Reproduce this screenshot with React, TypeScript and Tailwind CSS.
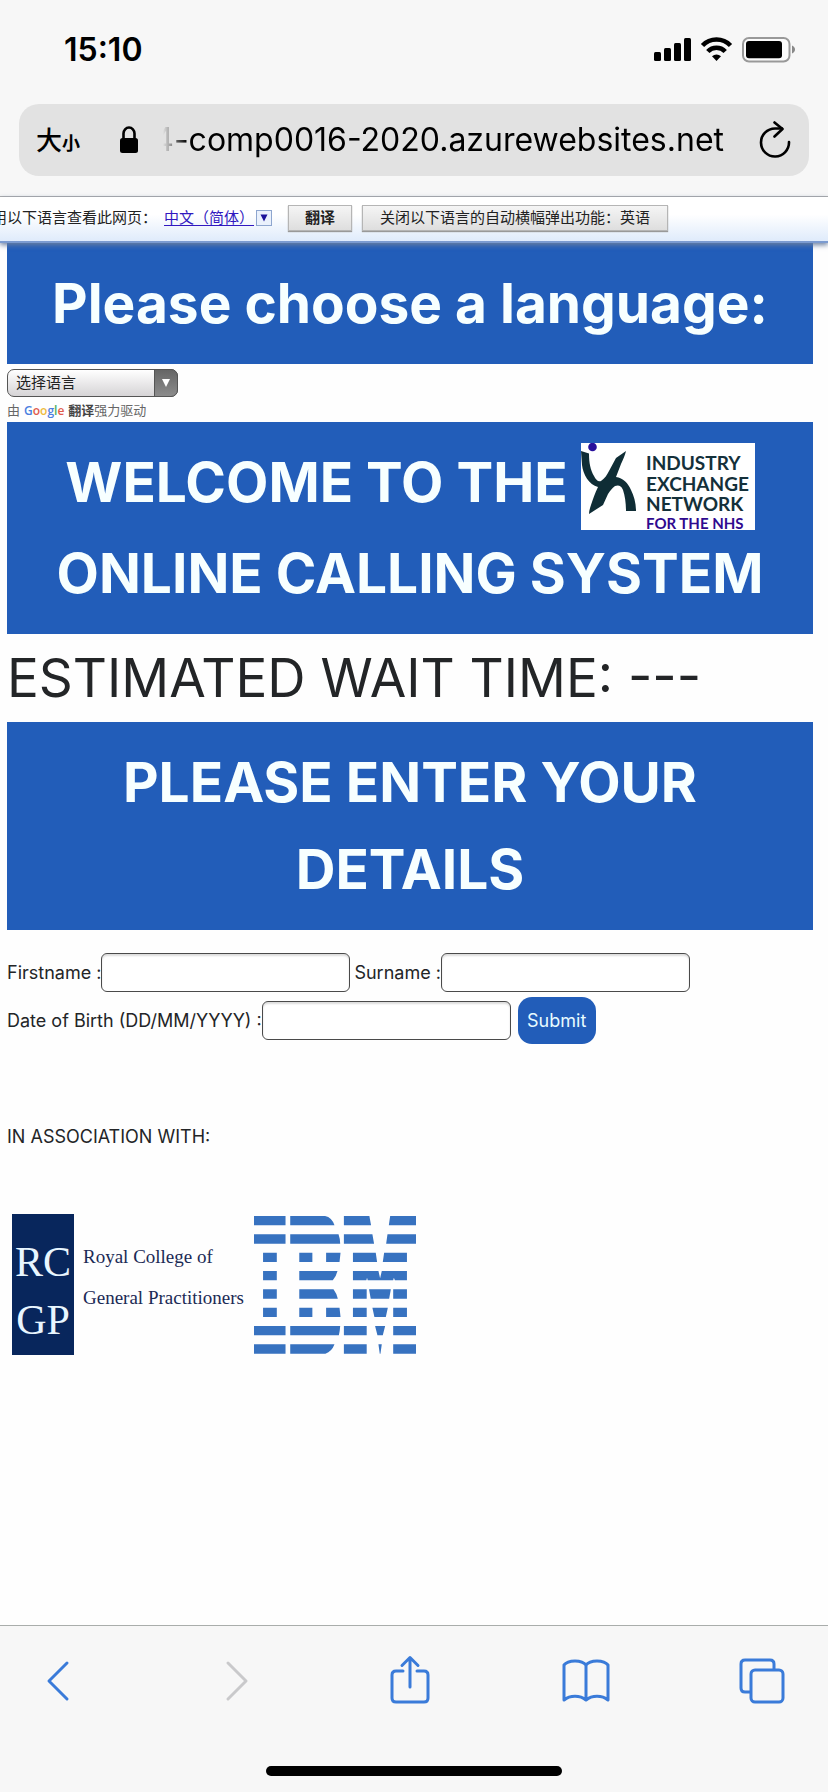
import React from "react";

function StatusIcons() {
  return (
    <svg className="h-8 w-[144px]" viewBox="652 34 144 32" aria-label="Signal, Wi-Fi and battery">
      <rect x="653" y="52" width="7" height="9" rx="1.5" />
      <rect x="663" y="48" width="7" height="13" rx="1.5" />
      <rect x="673" y="43" width="7" height="18" rx="1.5" />
      <rect x="683" y="38" width="7" height="23" rx="1.5" />
      <g fill="none" stroke="#000" strokeWidth="4.6">
        <path d="M701.5 45.5a19.500 19.500 0 0 1 28 0" />
        <path d="M706.800 51.500a12 12 0 0 1 17.400 0" />
      </g>
      <path d="M711 56.200a7 7 0 0 1 9 0l-4.500 4.800z" />
      <rect x="742" y="38" width="46.500" height="23.500" rx="6" fill="#fbfbfb" stroke="#999" strokeWidth="2" />
      <rect x="745" y="41" width="36" height="17.300" rx="3" />
      <path d="M791 45.500c4 1.500 4 6.500 0 8z" fill="#888" />
    </svg>
  );
}

function NetworkLogo() {
  return (
    <svg
      className="inline-block h-[87px] w-[174px] align-middle"
      viewBox="0 0 174 87"
      role="img"
      aria-label="Industry Exchange Network for the NHS"
    >
      <rect width="174" height="87" fill="#fff" />
      <path
        d="M0 8l8 2.500C8 20 9.500 27 13 33c2 4 4 6 7 5 4-3 6-6 8-10l7-13 10-7c-1 4-3 9-5 13l-5 13c7 1 12 6 15 13 3 6 5 13 5 21H45c0-8-1-15-3-21-2-5-5-5-8-4-3 2-5 5-7 8l-5 11-14 9c0-3 1-6 2-9 2-6 4-12 7-18C8 42 2 31 1 22z"
        fill="#0f2d35"
      />
      <circle cx="11.500" cy="4" r="4.300" fill="#28109c" />
      <g fontFamily="Lato, sans-serif" fontWeight="700" fontSize="19" fill="#14303a">
        <text x="65" y="27">INDUSTRY</text>
        <text x="65" y="47.500">EXCHANGE</text>
        <text x="65" y="68">NETWORK</text>
        <text x="65" y="86" fontSize="15" fill="#2f0a8f">FOR THE NHS</text>
      </g>
    </svg>
  );
}

function CollegeLogo() {
  return (
    <svg className="h-[142px] w-[236px]" viewBox="12 1214 236 142" role="img" aria-label="Royal College of General Practitioners">
      <rect x="12" y="1214" width="62" height="141" fill="#08265c" />
      <g fontFamily="Liberation Serif, serif">
        <g fill="#e8f6ff" fontSize="42" textAnchor="middle">
          <text x="43" y="1276">RC</text>
          <text x="43" y="1334">GP</text>
        </g>
        <g fill="#1b2a55" fontSize="19">
          <text x="83" y="1263">Royal College of</text>
          <text x="83" y="1304">General Practitioners</text>
        </g>
      </g>
    </svg>
  );
}

function IbmLogo() {
  return (
    <svg className="h-[138px] w-[162px]" viewBox="42 48 483 414" preserveAspectRatio="none" fill="#3772c0" role="img" aria-label="IBM">
      <path d="M42 48h94v28H42zM42 103h94v28H42zM69 158h41v28H69zM69 213h41v28H69zM69 268h41v28H69zM69 323h41v28H69zM42 378h94v28H42zM42 433h94v28H42z" />
      <path d="M150 48h104q20 4 28 28H150zM150 103h144q5 14 5 28H150zM177 158h39v28h-39zM257 158h43l-3 28h-40zM177 213h114q-4 16-14 28H177zM177 268h102q9 12 13 28H177zM177 323h39v28h-39zM257 323h40l3 28h-43zM150 378h149q-1 16-4 28H150zM150 433h132q-8 22-27 28H150z" />
      <path d="M310 48h76l5 28h-81zM448 48h77v28h-81zM310 103h85l5 28h-90zM440 103h85v28h-89zM337 158h68l4 28h-72zM430 158h68v28h-72zM337 213h76l5 22 5-22h75v28h-36l-3-8-2 8h-76l-2-8-2 8h-40zM337 268h41v28h-41zM385 268h65l-5 28h-55zM457 268h41v28h-41zM337 323h41v28h-41zM395 323h46l-6 28h-34zM457 323h41v28h-41zM310 378h68v28h-68zM403 378h30l-7 28h-16zM457 378h68v28h-68zM310 433h68v28h-68zM413 433h10l-4 28h-2zM457 433h68v28h-68z" />
    </svg>
  );
}

function Heading({ children }: { children: React.ReactNode }) {
  return (
    <h1 className="bg-[#225db9] px-8 py-[17px] text-center text-[55px] leading-[87px] font-bold text-[#f7ffff]">
      {children}
    </h1>
  );
}

function Field({ id, label }: { id: string; label: string }) {
  return (
    <div className="flex items-center">
      <label htmlFor={id}>{label}</label>
      <input
        id={id}
        type="text"
        className="h-[39px] w-[249px] rounded-md border border-[#4a4a4a] bg-white px-2 shadow-[inset_0_2px_2px_#ddd]"
      />
    </div>
  );
}

export default function App() {
  return (
    <div className="flex min-h-screen flex-col overflow-x-hidden bg-[#fefefe] font-['Inter','Noto_Sans_CJK_SC',sans-serif] text-[#232527]">
      <header className="border-b border-[#acacac] bg-[#f7f7f7] px-[19px] pb-5 text-black">
        <div className="flex h-[104px] items-center justify-between pr-3 pb-1 pl-[45px]">
          <span className="text-[32px] font-semibold">15:10</span>
          <StatusIcons />
        </div>
        <div className="flex h-[72px] items-center rounded-[20px] bg-[#e2e2e2] pr-[18px] pl-[17px]">
          <button type="button" className="flex items-baseline" aria-label="大小">
            <span className="text-[26px] font-medium">大</span>
            <span className="text-[18px] font-bold">小</span>
          </button>
          <svg className="ml-[39px] h-7 w-5" viewBox="0 0 20 28" aria-hidden="true">
            <rect x="1" y="12" width="18" height="15" rx="2.500" />
            <path d="M4.500 13V7.500a5.500 6 0 0 1 11 0V13" fill="none" stroke="#000" strokeWidth="2.600" />
          </svg>
          <div className="ml-6 flex min-w-0 flex-1 justify-end overflow-hidden mask-[linear-gradient(to_right,transparent,#000_24px)]">
            <span className="text-[32px] whitespace-nowrap">4-comp0016-2020.azurewebsites.net</span>
          </div>
          <button type="button" className="ml-[35px]" aria-label="Reload">
            <svg className="h-[38px] w-8" viewBox="0 0 32 38" fill="none" stroke="#000" strokeWidth="2.600" strokeLinecap="round" strokeLinejoin="round">
              <path d="M30 21A14 14 0 1 1 16 7.500h7" />
              <path d="M15.500 1.500l8 6.500-8 7.500" />
            </svg>
          </button>
        </div>
      </header>

      <div className="relative flex h-[46px] items-center border-b-2 border-[#7b9bd0] bg-linear-to-b from-white from-40% to-[#dfebfb] pb-0.5 text-[15px] whitespace-nowrap text-[#222] shadow-[0_2px_5px_#6b7f9f]">
        <span className="-ml-2">用以下语言查看此网页：</span>
        <a href="#languages" className="ml-[7px] flex items-center gap-0.5 text-[#3018c0]">
          <span className="underline underline-offset-2">中文（简体）</span>
          <svg className="h-4 w-4" viewBox="0 0 16 16" aria-hidden="true">
            <rect x=".5" y=".5" width="15" height="15" fill="#eaf1fc" stroke="#8ea6cf" />
            <path d="M4.500 4.500h7l-3.500 7z" fill="#1c1299" />
          </svg>
        </a>
        <button type="button" className="ml-4 h-[26px] w-16 border border-[#b5b5b5] bg-linear-to-b from-[#f5f5f5] to-[#dedede] font-bold shadow-[0_1px_1px_#999]">
          翻译
        </button>
        <button type="button" className="ml-2.5 h-[26px] border border-[#b5b5b5] bg-linear-to-b from-[#f5f5f5] to-[#dedede] px-[17px] shadow-[0_1px_1px_#999]">
          关闭以下语言的自动横幅弹出功能：英语
        </button>
      </div>

      <main className="flex-1 pr-[15px] pl-[7px]">
        <Heading>Please choose a language:</Heading>
        <div className="pt-[5px]">
          <div className="relative h-7 w-[171px]">
            <select
              aria-label="选择语言"
              className="h-full w-full appearance-none rounded-[7px] border border-[#555] bg-linear-to-b from-white to-[#d6d4d6] pl-2 text-[15px] leading-[26px] text-[#222]"
            >
              <option>选择语言</option>
            </select>
            <span className="pointer-events-none absolute inset-y-0 right-0 flex w-6 items-center justify-center rounded-r-[7px] border border-[#555] bg-linear-to-b from-[#666] to-[#8c8c8c]">
              <svg className="h-2 w-2" viewBox="0 0 8 8" fill="#fff" aria-hidden="true">
                <path d="M0 0h8L4 8z" />
              </svg>
            </span>
          </div>
          <p className="flex h-[25px] items-center pt-0.5 text-[13px] text-[#666]">
            由
            <span className="mx-1 font-['Open_Sans',sans-serif] text-[12px] font-semibold">
              <span className="text-[#4b7fe0]">G</span>
              <span className="text-[#e05a4b]">o</span>
              <span className="text-[#eebb3c]">o</span>
              <span className="text-[#4b7fe0]">g</span>
              <span className="text-[#4fae63]">l</span>
              <span className="text-[#e05a4b]">e</span>
            </span>
            <b className="font-bold text-[#444]">翻译</b>强力驱动
          </p>
        </div>
        <Heading>
          WELCOME TO THE <NetworkLogo /> ONLINE CALLING SYSTEM
        </Heading>
        <p className="text-[53px] leading-[88px]">ESTIMATED WAIT TIME: ---</p>
        <Heading>PLEASE ENTER YOUR DETAILS</Heading>

        <form className="flex flex-col gap-[5px] pt-[23px] text-[18px]" onSubmit={(e) => e.preventDefault()}>
          <div className="flex flex-wrap items-center gap-1">
            <Field id="firstname" label="Firstname :" />
            <Field id="surname" label="Surname :" />
          </div>
          <div className="flex flex-wrap items-center gap-[7px]">
            <Field id="dob" label="Date of Birth (DD/MM/YYYY) :" />
            <button type="submit" className="h-[47px] w-[78px] rounded-[14px] bg-[#225db9] text-[#e8fbff]">
              Submit
            </button>
          </div>
        </form>

        <p className="mt-[79px] text-[18px] leading-[27px]">IN ASSOCIATION WITH:</p>
        <div className="mt-16 flex items-center gap-1.5 pl-[5px]">
          <CollegeLogo />
          <IbmLogo />
        </div>
      </main>

      <footer className="border-t border-[#a9adab] bg-[#f7f7f7]">
        <nav className="flex h-[110px] items-center justify-between pr-[42px] pl-[34px]">
          <button type="button" className="flex w-12 justify-center" aria-label="Back">
            <svg className="h-12 w-8" viewBox="0 0 32 48" fill="none" stroke="#3a7bd9" strokeWidth="3" strokeLinecap="round" strokeLinejoin="round">
              <path d="M25 6L7 24l18 18" />
            </svg>
          </button>
          <button type="button" className="flex w-12 justify-center" aria-label="Forward">
            <svg className="h-12 w-8" viewBox="0 0 32 48" fill="none" stroke="#c9c9cb" strokeWidth="3" strokeLinecap="round" strokeLinejoin="round">
              <path d="M10 6l18 18L10 42" />
            </svg>
          </button>
          <button type="button" className="flex w-12 justify-center" aria-label="Share">
            <svg className="h-[52px] w-10" viewBox="0 0 40 52" fill="none" stroke="#3a7bd9" strokeWidth="3" strokeLinecap="round" strokeLinejoin="round">
              <path d="M13 16H6q-4 0-4 4v23q0 4 4 4h28q4 0 4-4V20q0-4-4-4h-7" />
              <path d="M20 32V2.500M12 10.500l8-8 8 8" />
            </svg>
          </button>
          <button type="button" className="flex w-12 justify-center" aria-label="Bookmarks">
            <svg className="h-11 w-12" viewBox="0 0 48 44" fill="none" stroke="#3a7bd9" strokeWidth="3" strokeLinejoin="round">
              <path d="M24 6C20 .500 6 .500 2 6v35c6-5 16-5 22 0 6-5 16-5 22 0V6C42 .500 28 .500 24 6zM24 6v35" />
            </svg>
          </button>
          <button type="button" className="flex w-12 justify-center" aria-label="Tabs">
            <svg className="h-[46px] w-[46px]" viewBox="0 0 46 46" fill="none" stroke="#3a7bd9" strokeWidth="3">
              <path d="M12 34H6q-4 0-4-4V6q0-4 4-4h25q4 0 4 4v6" />
              <rect x="12" y="12" width="32" height="32" rx="4" />
            </svg>
          </button>
        </nav>
        <div className="flex h-14 justify-center pt-[30px]">
          <div className="h-2.5 w-[296px] rounded-full bg-black" />
        </div>
      </footer>
    </div>
  );
}
